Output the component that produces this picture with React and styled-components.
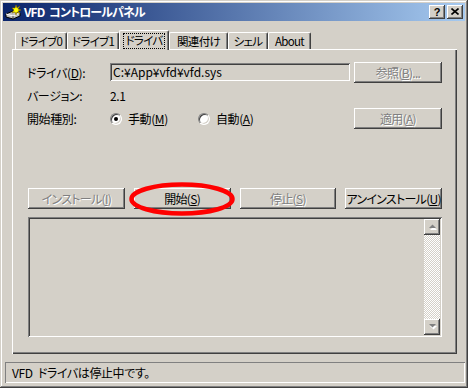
import React from 'react';
import styled, { createGlobalStyle, css } from 'styled-components';

const face = '#D4D0C8';

const GlobalStyle = createGlobalStyle`
  html, body {
    margin: 0;
    padding: 0;
    background: ${face};
  }
  body {
    font-family: "Noto Sans CJK JP", "Liberation Sans", sans-serif;
    font-size: 12px;
  }
`;

const raised = css`
  box-shadow: inset -1px -1px #404040, inset 1px 1px #fff,
    inset -2px -2px #808080, inset 2px 2px ${face};
`;

const sunken = css`
  box-shadow: inset 1px 1px #808080, inset -1px -1px #fff,
    inset 2px 2px #404040, inset -2px -2px ${face};
`;

const disabledText = css`
  color: #808080;
  text-shadow: 1px 1px #fff;
`;

const Window = styled.div`
  width: 468px;
  height: 388px;
  box-sizing: border-box;
  padding: 3px;
  background: ${face};
  box-shadow: inset -1px -1px #404040, inset 1px 1px ${face},
    inset -2px -2px #808080, inset 2px 2px #fff;
  display: flex;
  flex-direction: column;
  font-feature-settings: "palt";
  letter-spacing: -0.4px;
  white-space: nowrap;
  color: #000;
  line-height: 1;
`;

const TitleBar = styled.div`
  height: 18px;
  flex-shrink: 0;
  display: flex;
  align-items: center;
  padding: 0 2px;
  background: linear-gradient(to right, #0a246a, #a6caf0);
`;

const TitleText = styled.span`
  color: #fff;
  font-weight: bold;
  letter-spacing: -0.9px;
  word-spacing: 3px;
  margin-left: 3px;
  flex: 1;
`;

const CapButtons = styled.div`
  display: flex;
  gap: 2px;
`;

const CapButton = styled.div`
  width: 16px;
  height: 14px;
  box-sizing: border-box;
  background: ${face};
  ${raised};
  display: flex;
  align-items: center;
  justify-content: center;
  font: bold 11px "Liberation Sans", sans-serif;
  letter-spacing: 0;
  padding-bottom: 1px;
`;

const TabStrip = styled.div`
  display: flex;
  align-items: flex-end;
  height: 19px;
  margin: 9px 0 0 9px;
  padding-left: 3px;
  position: relative;
  z-index: 1;
`;

const Tab = styled.div`
  width: ${p => p.$w}px;
  height: ${p => (p.$active ? 20 : 17)}px;
  margin-bottom: ${p => (p.$active ? -1 : 0)}px;
  box-sizing: border-box;
  background: ${face};
  border-top: 1px solid #fff;
  border-left: 1px solid #fff;
  border-right: 1px solid #404040;
  border-radius: 2px 2px 0 0;
  box-shadow: inset -1px 0 #808080;
  display: flex;
  align-items: center;
  justify-content: center;
  padding-top: 1px;
  font-size: 11.5px;
  letter-spacing: -0.7px;
`;

const FocusBox = styled.span`
  border: 1px dotted #000;
  padding: 1px 1px;
`;

const Panel = styled.div`
  width: 445px;
  height: 305px;
  flex-shrink: 0;
  margin-left: 9px;
  box-sizing: border-box;
  box-shadow: inset 1px 1px #fff, inset -1px -1px #404040,
    inset -2px -2px #808080;
  padding: 13px 15px 0 16px;
  display: flex;
  flex-direction: column;
`;

const Row = styled.div`
  display: flex;
  align-items: ${p => (p.$top ? 'flex-start' : 'center')};
  height: 21px;
  margin-top: ${p => p.$gap || 0}px;
`;

const Label = styled.span`
  width: 83px;
  margin-left: -1px;
  align-self: center;
`;

const Value = styled.span`
  flex: 1;
`;

const Field = styled.div`
  width: 240px;
  height: 18px;
  margin-top: 1px;
  box-sizing: border-box;
  ${sunken};
  display: flex;
  align-items: center;
  padding-left: 3px;
  letter-spacing: 0;
`;

const Button = styled.button`
  width: ${p => (p.$w ? `${p.$w}px` : 'auto')};
  flex: ${p => (p.$w ? 'none' : '1 1 0')};
  min-width: 0;
  height: 21px;
  margin-left: ${p => (p.$push ? 'auto' : 0)};
  box-sizing: border-box;
  border: none;
  padding: 0;
  background: ${face};
  ${raised};
  font-family: inherit;
  font-size: 12px;
  font-feature-settings: "palt";
  letter-spacing: -0.7px;
  white-space: nowrap;
  color: #000;
  ${p => p.disabled && disabledText};
`;

const RadioGroup = styled.div`
  display: flex;
  flex: 1;
`;

const RadioOption = styled.label`
  display: flex;
  align-items: center;
  gap: 6px;
  width: 88px;
`;

const RadioCircle = styled.span`
  width: 12px;
  height: 12px;
  box-sizing: border-box;
  border-radius: 50%;
  background: #fff;
  border: 1px solid;
  border-color: #808080 #fff #fff #808080;
  box-shadow: inset 1px 1px #404040, inset -1px -1px ${face};
  display: flex;
  align-items: center;
  justify-content: center;

  &::after {
    content: '';
    width: 4px;
    height: 4px;
    border-radius: 50%;
    background: ${p => (p.$checked ? '#000' : 'transparent')};
  }
`;

const ButtonRow = styled.div`
  display: flex;
  gap: 9px;
  margin-top: 59px;
  position: relative;
`;

const Highlight = styled.svg`
  position: absolute;
  left: 101px;
  top: -6px;
  pointer-events: none;
`;

const Log = styled.div`
  height: 120px;
  margin-top: 8px;
  box-sizing: border-box;
  ${sunken};
  padding: 2px;
  display: flex;
  justify-content: flex-end;
`;

const ScrollBar = styled.div`
  width: 16px;
  display: flex;
  flex-direction: column;
`;

const ScrollButton = styled.div`
  width: 16px;
  height: 16px;
  box-sizing: border-box;
  background: ${face};
  ${raised};
  display: flex;
  align-items: center;
  justify-content: center;
`;

const ScrollTrack = styled.div`
  flex: 1;
  background-color: ${face};
  background-image: conic-gradient(#fff 25%, ${face} 0 50%, #fff 0 75%, ${face} 0);
  background-size: 2px 2px;
`;

const StatusBar = styled.div`
  width: 460px;
  height: 21px;
  flex-shrink: 0;
  margin: 8px 0 0 2px;
  box-sizing: border-box;
  box-shadow: inset 1px 1px #808080, inset -1px -1px #fff;
  display: flex;
  align-items: center;
  padding-left: 7px;
  word-spacing: 3px;
`;

const AppIcon = () => (
  <svg width="16" height="16" viewBox="0 0 16 16">
    <path d="M1 10 L8 7 L15 9 L15 12 L8 15 L1 13 Z" fill="#c0c0c0" stroke="#000" strokeWidth="1" />
    <path d="M1 10 L8 12 L15 9" fill="none" stroke="#fff" strokeWidth="1" />
    <path d="M8 12 L8 15" stroke="#404040" strokeWidth="1" />
    <polygon
      points="11,1 12,4 15,2 13,5 16,6 13,7 15,10 12,8 11,11 10,8 7,9 9,6 7,4 10,4"
      fill="#ffff00"
      stroke="#806000"
      strokeWidth="0.6"
    />
  </svg>
);

const Arrow = ({ down }) => (
  <svg width="9" height="6" viewBox="0 0 9 6">
    <polygon
      points={down ? '1,1 8,1 4.5,4.5' : '1,5 8,5 4.5,1.5'}
      fill="#fff"
      transform="translate(1,1)"
    />
    <polygon points={down ? '0,0 7,0 3.5,3.5' : '0,4 7,4 3.5,0.5'} fill="#808080" transform="translate(1,0)" />
  </svg>
);

const tabs = [
  { label: 'ドライブ0', w: 52 },
  { label: 'ドライブ1', w: 52 },
  { label: 'ドライバ', w: 50, active: true },
  { label: '関連付け', w: 59 },
  { label: 'シェル', w: 40 },
  { label: 'About', w: 43 },
];

export default function App() {
  return (
    <>
      <GlobalStyle />
      <Window>
        <TitleBar>
          <AppIcon />
          <TitleText>VFD コントロールパネル</TitleText>
          <CapButtons>
            <CapButton>?</CapButton>
            <CapButton>
              <svg width="8" height="7" viewBox="0 0 8 7">
                <path d="M0.5 0.5 L7.5 6.5 M7.5 0.5 L0.5 6.5" stroke="#000" strokeWidth="1.6" />
              </svg>
            </CapButton>
          </CapButtons>
        </TitleBar>

        <TabStrip>
          {tabs.map(t => (
            <Tab key={t.label} $w={t.w} $active={t.active}>
              {t.active ? <FocusBox>{t.label}</FocusBox> : t.label}
            </Tab>
          ))}
        </TabStrip>

        <Panel>
          <Row $top>
            <Label>
              ドライバ(<u>D</u>):
            </Label>
            <Field>C:¥App¥vfd¥vfd.sys</Field>
            <Button $w={88} $push disabled>
              参照(<u>B</u>)...
            </Button>
          </Row>
          <Row $gap={2}>
            <Label>バージョン:</Label>
            <Value>2.1</Value>
          </Row>
          <Row $gap={2}>
            <Label>開始種別:</Label>
            <RadioGroup>
              <RadioOption>
                <RadioCircle $checked />
                <span>
                  手動(<u>M</u>)
                </span>
              </RadioOption>
              <RadioOption>
                <RadioCircle />
                <span>
                  自動(<u>A</u>)
                </span>
              </RadioOption>
            </RadioGroup>
            <Button $w={88} disabled>
              適用(<u>A</u>)
            </Button>
          </Row>

          <ButtonRow>
            <Button disabled>
              インストール(<u>I</u>)
            </Button>
            <Button>
              開始(<u>S</u>)
            </Button>
            <Button disabled>
              停止(<u>S</u>)
            </Button>
            <Button>
              アンインストール(<u>U</u>)
            </Button>
            <Highlight width="106" height="34" viewBox="0 0 106 34">
              <ellipse cx="53" cy="17" rx="50.5" ry="14.5" fill="none" stroke="#ff0000" strokeWidth="4.5" />
            </Highlight>
          </ButtonRow>

          <Log>
            <ScrollBar>
              <ScrollButton>
                <Arrow />
              </ScrollButton>
              <ScrollTrack />
              <ScrollButton>
                <Arrow down />
              </ScrollButton>
            </ScrollBar>
          </Log>
        </Panel>

        <StatusBar>VFD ドライバは停止中です。</StatusBar>
      </Window>
    </>
  );
}
